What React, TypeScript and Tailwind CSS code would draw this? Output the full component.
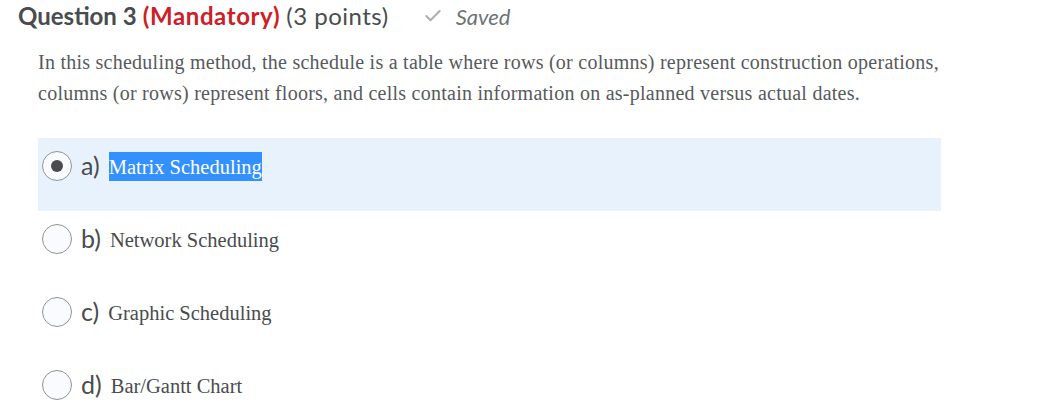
import { Check } from 'lucide-react'

const options = [
  { key: 'a', label: 'Matrix Scheduling', selected: true },
  { key: 'b', label: 'Network Scheduling', selected: false },
  { key: 'c', label: 'Graphic Scheduling', selected: false },
  { key: 'd', label: 'Bar/Gantt Chart', selected: false },
]

export default function App() {
  return (
    <div className="w-[1059px] h-[412px] bg-white overflow-hidden font-['Lato',sans-serif]">
      {/* Header */}
      <div className="flex items-center h-[32px] pl-[18px]">
        <h2 className="text-[24px] text-[#494c4e] whitespace-nowrap">
          <span className="font-bold">Question 3</span>{' '}
          <span className="font-bold tracking-[0.6px] text-[#cd2026]">(Mandatory)</span>{' '}
          <span className="tracking-[0.5px]">(3 points)</span>
        </h2>
        <div className="flex items-center ml-[34px] text-[#6e7376]">
          <Check className="w-[20px] h-[20px] text-[#a9b0b5]" strokeWidth={2.5} />
          <span className="ml-[13px] text-[22px] italic">Saved</span>
        </div>
      </div>

      {/* Question text */}
      <p className="ml-[38px] mt-[15px] w-[910px] text-[20px] tracking-[0.25px] leading-[31px] text-[#565a5c] font-['Liberation_Serif',serif]">
        In this scheduling method, the schedule is a table where rows (or columns) represent construction operations,
        columns (or rows) represent floors, and cells contain information on as-planned versus actual dates.
      </p>

      {/* Options */}
      <div className="ml-[38px] mt-[29px] w-[903px]">
        {options.map((opt) => (
          <div
            key={opt.key}
            className={`h-[73px] pt-[13px] pl-[4px] ${opt.selected ? 'bg-[#e8f2fc]' : ''}`}
          >
            <div className="flex items-center h-[30px]">
              <span className="w-[30px] h-[30px] shrink-0 rounded-full border border-[#8f9499] bg-[#f9fbff] flex items-center justify-center">
                {opt.selected && <span className="w-[12px] h-[12px] rounded-full bg-[#494c4e]" />}
              </span>
              <span className="ml-[9px] text-[25px] text-[#494c4e]">{opt.key})</span>
              {opt.selected ? (
                <span className="ml-[9px] h-[29px] leading-[30px] bg-[#3390ff] text-white text-[20.5px] font-['Liberation_Serif',serif]">
                  {opt.label}
                </span>
              ) : (
                <span className="ml-[9px] mt-[3px] text-[20.5px] text-[#494c4e] font-['Liberation_Serif',serif]">
                  {opt.label}
                </span>
              )}
            </div>
          </div>
        ))}
      </div>
    </div>
  )
}
